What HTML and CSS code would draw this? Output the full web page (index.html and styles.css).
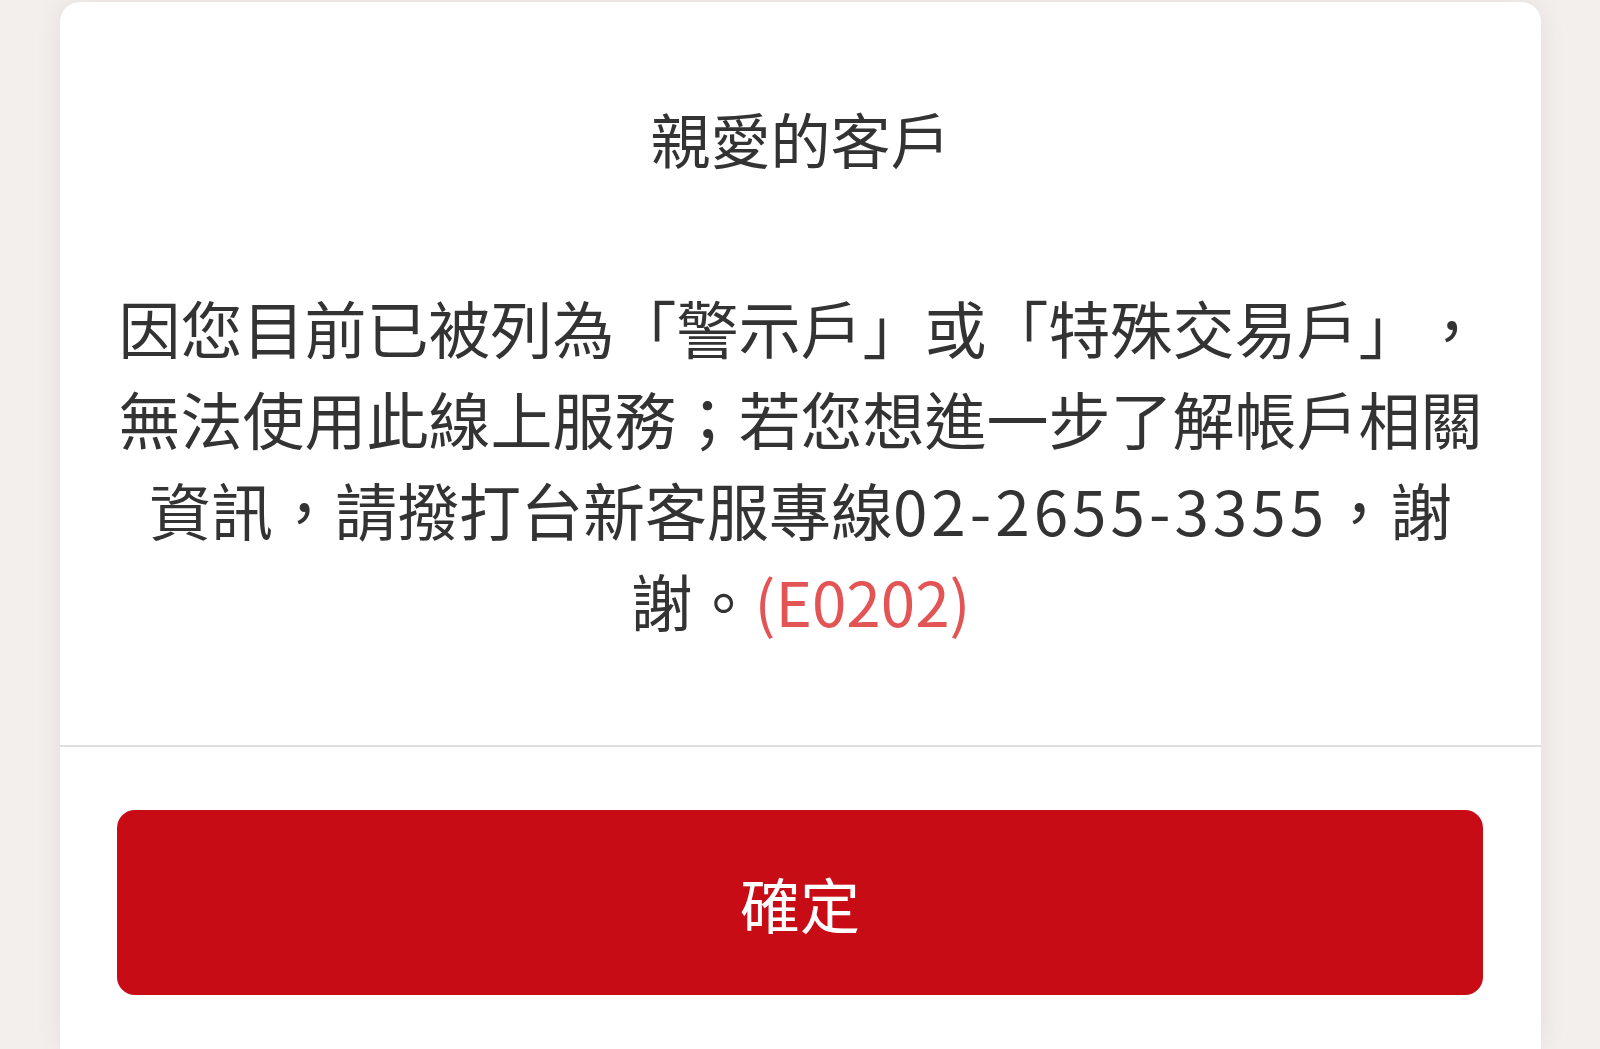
FILE: index.html
```html
<!DOCTYPE html>
<html lang="zh-Hant">
<head>
<meta charset="utf-8">
<title>親愛的客戶</title>
<link rel="stylesheet" href="styles.css">
</head>
<body>
<div class="dialog">
  <div class="dialog-content">
    <h1 class="dialog-title">親愛的客戶</h1>
    <p class="dialog-message">因您目前已被列為「警示戶」或「特殊交易戶」，<br>無法使用此線上服務；若您想進一步了解帳戶相關<br>資訊，請撥打台新客服專線<span class="phone">02-2655-3355</span>，謝<br>謝。<span class="error-code">(E0202)</span></p>
  </div>
  <div class="dialog-footer">
    <button class="btn-confirm" type="button">確定</button>
  </div>
</div>
</body>
</html>
```

FILE: styles.css
```css
html, body {
  margin: 0;
  padding: 0;
}
body {
  width: 1600px;
  height: 1049px;
  overflow: hidden;
  background: #f3efed;
  font-family: "Noto Sans CJK TC", "Noto Sans", sans-serif;
  color: #333;
  padding-top: 2px;
  box-sizing: border-box;
}
.dialog {
  margin-left: 60px;
  width: 1481px;
  height: 1047px;
  background: #fff;
  border-radius: 20px 20px 0 0;
  box-shadow: 0 0 24px rgba(120, 100, 95, 0.12);
}
.dialog-content {
  padding: 96px 40px 99px;
  text-align: center;
}
.dialog-title {
  margin: 0 0 104px;
  font-size: 60px;
  line-height: 80px;
  font-weight: 400;
  color: #333;
}
.dialog-message {
  margin: 0;
  font-size: 62px;
  line-height: 91px;
  color: #333;
  text-spacing-trim: space-all;
}
.phone {
  letter-spacing: 4px;
}
.error-code {
  color: #e35454;
}
.dialog-footer {
  border-top: 2px solid #dedede;
  padding: 63px 58px 0 57px;
}
.btn-confirm {
  display: block;
  width: 100%;
  height: 185px;
  border: none;
  border-radius: 18px;
  background: #c70c16;
  color: #fff;
  font-family: "Noto Sans CJK TC", sans-serif;
  font-size: 60px;
  font-weight: 400;
  cursor: pointer;
}
```
